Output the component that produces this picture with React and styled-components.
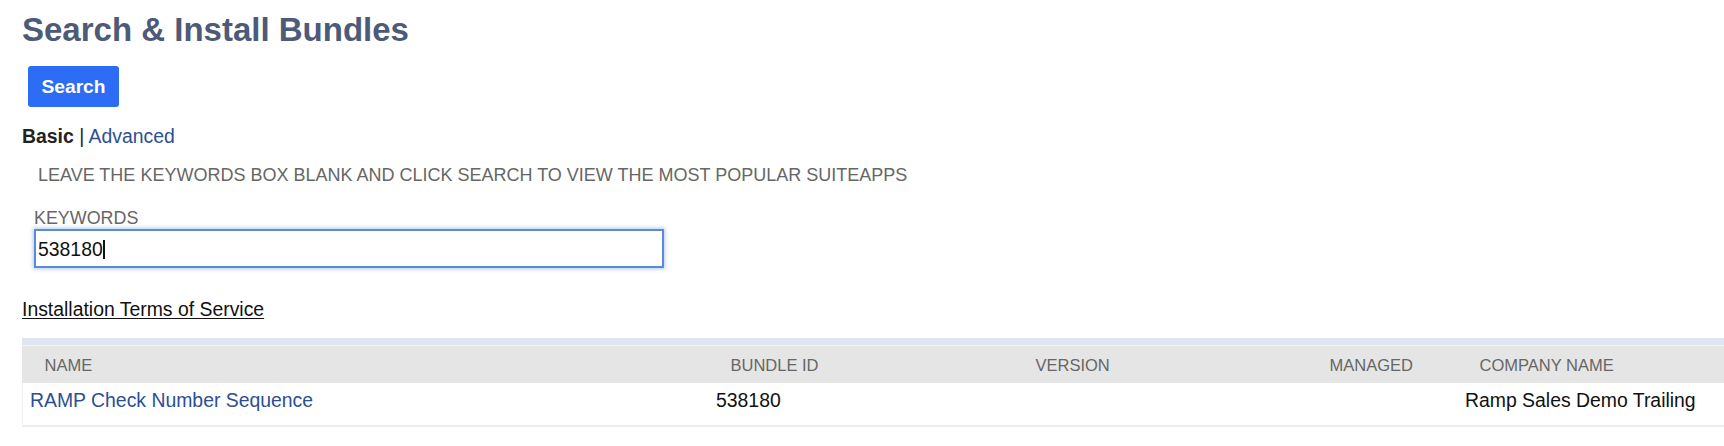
import React from 'react';
import styled, { createGlobalStyle } from 'styled-components';

const GlobalStyle = createGlobalStyle`
  html, body {
    margin: 0;
    padding: 0;
    background: #fff;
  }
  body {
    font-family: "Liberation Sans", Arial, Helvetica, sans-serif;
    color: #222;
  }
`;

const Page = styled.div`
  padding: 10px 0 0 22px;
`;

const Title = styled.h1`
  margin: 0;
  font-size: 33px;
  line-height: 40px;
  font-weight: bold;
  color: #4d5a78;
`;

const SearchButton = styled.button`
  display: flex;
  align-items: center;
  justify-content: center;
  margin: 16px 0 0 6px;
  width: 91px;
  height: 41px;
  padding: 0;
  border: none;
  border-radius: 3px;
  background: #2d6cf5;
  color: #fff;
  font-family: inherit;
  font-size: 19.2px;
  font-weight: bold;
  cursor: pointer;
`;

const ModeSwitch = styled.div`
  margin-top: 18px;
  font-size: 19.4px;
  line-height: 22px;
  color: #222;
`;

const ModeActive = styled.b`
  font-weight: bold;
`;

const Link = styled.a`
  color: #2b4f94;
  text-decoration: none;
  cursor: pointer;
`;

const Hint = styled.div`
  margin: 18px 0 0 16px;
  font-size: 18px;
  line-height: 20px;
  color: #666;
  text-transform: uppercase;
`;

const Field = styled.div`
  display: flex;
  flex-direction: column;
  gap: 1px;
  margin: 23px 0 0 12px;
  width: 630px;
`;

const FieldLabel = styled.label`
  font-size: 17.9px;
  line-height: 20px;
  color: #666;
`;

const FieldBox = styled.div`
  display: flex;
  align-items: center;
  box-sizing: border-box;
  height: 39px;
  padding: 1px 0 0 2px;
  border: 2px solid #5b8bd6;
  box-shadow: 0 0 4px 1px rgba(90, 140, 215, 0.45);
  font-size: 19.4px;
  color: #111;
`;

const Caret = styled.span`
  display: inline-block;
  width: 1.5px;
  height: 19px;
  margin-left: 0.5px;
  background: #111;
`;

const TermsLink = styled.a`
  display: block;
  margin-top: 30px;
  font-size: 19.4px;
  line-height: 22px;
  color: #111;
  text-decoration: underline;
  text-underline-offset: 2px;
  width: max-content;
`;

const Table = styled.div`
  margin-top: 18px;
  border-top: 7px solid #e0e6ef;
`;

const Row = styled.div`
  display: grid;
  grid-template-columns: 686px 305px 294px 150px 1fr;
  background: ${(p) => (p.$head ? '#e5e5e5' : '#fff')};
  border-top: ${(p) => (p.$head ? '1px solid #f2f4f8' : 'none')};
  border-left: ${(p) => (p.$head ? 'none' : '1px solid #f0f0f0')};
  border-bottom: ${(p) => (p.$head ? 'none' : '2px solid #ececec')};
  height: ${(p) => (p.$head ? '38px' : '44px')};
  box-sizing: border-box;
`;

const HeadCell = styled.div`
  display: flex;
  align-items: center;
  padding: 1px 0 0 22.5px;
  font-size: 16.5px;
  color: #666;
  text-transform: uppercase;
`;

const Cell = styled.div`
  padding: 6px 0 0 7px;
  font-size: 19.4px;
  line-height: 22px;
  color: #111;
`;

const columns = ['Name', 'Bundle ID', 'Version', 'Managed', 'Company Name'];

const results = [
  {
    name: 'RAMP Check Number Sequence',
    id: '538180',
    version: '',
    managed: '',
    company: 'Ramp Sales Demo Trailing',
  },
];

export default function App() {
  return (
    <>
      <GlobalStyle />
      <Page>
        <Title>Search &amp; Install Bundles</Title>
        <SearchButton>Search</SearchButton>
        <ModeSwitch>
          <ModeActive>Basic</ModeActive> | <Link>Advanced</Link>
        </ModeSwitch>
        <Hint>Leave the keywords box blank and click search to view the most popular SuiteApps</Hint>
        <Field>
          <FieldLabel>KEYWORDS</FieldLabel>
          <FieldBox>
            538180
            <Caret />
          </FieldBox>
        </Field>
        <TermsLink>Installation Terms of Service</TermsLink>
        <Table>
          <Row $head>
            {columns.map((c) => (
              <HeadCell key={c}>{c}</HeadCell>
            ))}
          </Row>
          {results.map((r) => (
            <Row key={r.id}>
              <Cell>
                <Link>{r.name}</Link>
              </Cell>
              <Cell>{r.id}</Cell>
              <Cell>{r.version}</Cell>
              <Cell>{r.managed}</Cell>
              <Cell>{r.company}</Cell>
            </Row>
          ))}
        </Table>
      </Page>
    </>
  );
}
